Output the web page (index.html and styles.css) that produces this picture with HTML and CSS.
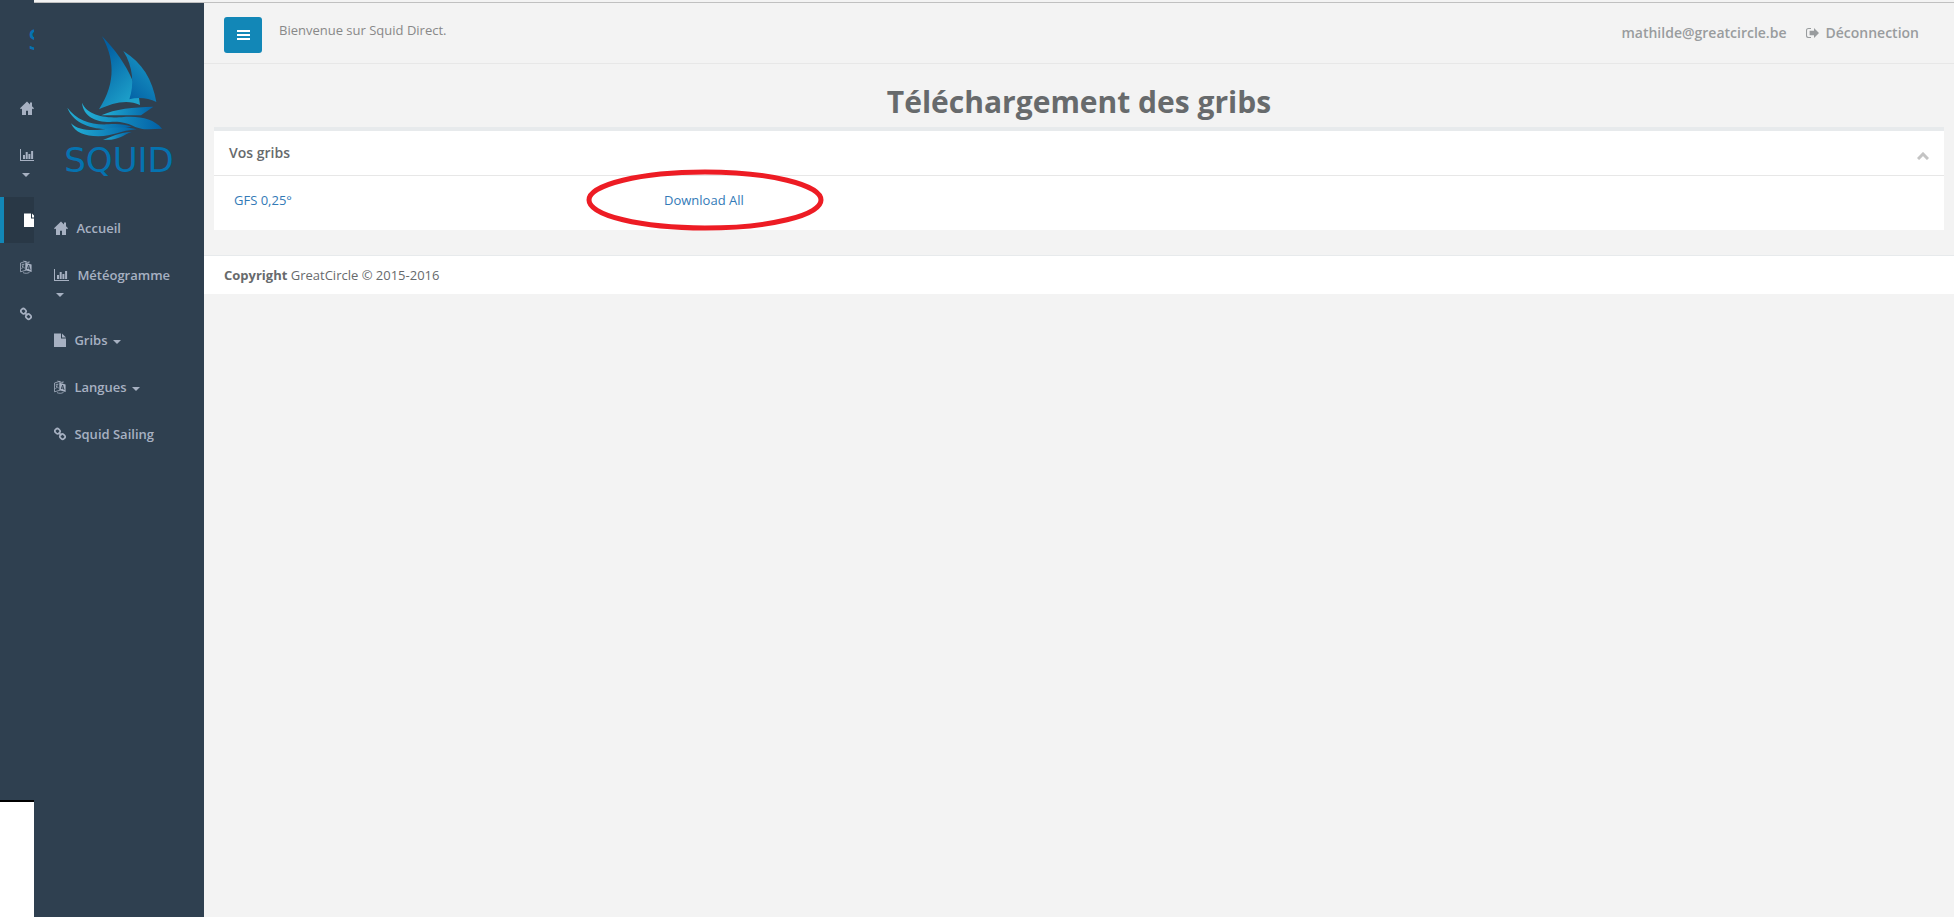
FILE: index.html
```html
<!DOCTYPE html>
<html lang="fr">
<head>
<meta charset="utf-8">
<title>Squid Direct</title>
<link rel="stylesheet" href="styles.css">
</head>
<body>
<svg class="defs" width="0" height="0" aria-hidden="true">
    <symbol id="i-home" viewBox="0 0 14 14"><path d="M7 .5L0 7.200l1 1L2 7.400V14h4V9.800h2V14h4V7.400l1 .8 1-1-2-1.900V1.500h-2v1.900z"/></symbol>
    <symbol id="i-chart" viewBox="0 0 15 14"><path d="M0 1h1v11h14v1H0zM3 7h2v4H3zM5.700 4h2v7h-2zM8.400 6h2v5h-2zM11.100 3h2v8h-2z"/></symbol>
    <symbol id="i-file" viewBox="0 0 12 14"><path d="M0 .5h7v5h5V14H0zM8 .5l4 4H8z"/></symbol>
    <symbol id="i-lang" viewBox="0 0 12 14"><path d="M5.500 2.800L11.600 4.500v7.500L5.500 10.200z"/><path d="M.5 3L6 1.300v8.900L.5 11.800zM3.400 1l5.600 1.800V1.200M3 12.600c2 1 4.500.9 6.500-.2" fill="none" stroke="currentColor" stroke-width=".8"/><path d="M1.500 5l3-.9M3 3.700v1.600C2.800 7 2.300 8 1.500 9M2 6l2.800 2.200" fill="none" stroke="currentColor" stroke-width=".7"/><path d="M7.300 9l1.300-4 1.500 5M7.700 7.900l2 .6" fill="none" stroke="#2f4050" stroke-width=".9"/></symbol>
    <symbol id="i-link" viewBox="0 0 12 14"><g fill="none" stroke="currentColor" stroke-width="1.700"><rect x="1" y="1.900" width="5" height="4.600" rx="1.900" transform="rotate(45 3.500 4.200)"/><rect x="6" y="7.300" width="5" height="4.600" rx="1.900" transform="rotate(45 8.500 9.600)"/><path d="M4.600 5.600l2.800 2.800"/></g></symbol>
    <symbol id="i-out" viewBox="0 0 13 14"><path d="M5 2.500H2.500q-2 0-2 2v5q0 2 2 2H5" fill="none" stroke="currentColor" stroke-width="1.100"/><path d="M8 2l5 5-5 5V9.200H3.600V4.800H8z"/></symbol>
</svg>

<!-- collapsed menu -->
<div class="rail">
    <nav class="rail-nav">
        <span class="rail-brand">S</span>
        <ul class="menu">
            <li><a href="#" aria-label="Accueil"><svg class="icon w14"><use href="#i-home"/></svg></a></li>
            <li><a href="#" aria-label="Météogramme"><svg class="icon w15"><use href="#i-chart"/></svg> <span class="caret"></span></a></li>
            <li class="active"><a href="#" aria-label="Gribs"><svg class="icon w12"><use href="#i-file"/></svg></a></li>
            <li><a href="#" aria-label="Langues"><svg class="icon w12"><use href="#i-lang"/></svg></a></li>
            <li><a href="#" aria-label="Squid Sailing"><svg class="icon w12"><use href="#i-link"/></svg></a></li>
        </ul>
    </nav>
    <div class="rail-end"></div>
</div>

<div class="page">
    <!-- full menu -->
    <nav class="sidebar">
        <div class="brand">
            <svg class="boat" viewBox="-3 0 360 330" aria-hidden="true">
                <defs>
                    <linearGradient id="sail1" x1="0" y1="0" x2=".6" y2="1"><stop offset="0.2" stop-color="#0260a3"/><stop offset="1" stop-color="#1ea2cb"/></linearGradient>
                    <linearGradient id="sail2" x1=".2" y1="1" x2=".7" y2=".2"><stop offset="0" stop-color="#0360a5"/><stop offset="1" stop-color="#1690c0"/></linearGradient>
                    <linearGradient id="hull" x1="0" y1="0" x2="1" y2="0"><stop offset="0" stop-color="#23b0d6"/><stop offset="1" stop-color="#0260a5"/></linearGradient>
                </defs>
                <path fill="url(#sail1)" d="M126 19C160 80 172 155 117 238C158 217 205 207 240 225L237 203L217 150C198 105 165 58 126 19z"/>
                <path fill="url(#sail2)" d="M190 63C247 98 278 150 289 216C265 204 235 201 208 208C223 165 220 110 190 63z"/>
                <path fill="url(#hull)" d="M124 256C165 236 220 232 280 230L243 256z"/>
                <path fill="url(#hull)" d="M66 218C82 257 135 264 185 262C235 257 280 265 306 296L265 298C220 300 215 272 150 276C105 276 70 258 66 218z"/>
                <path fill="url(#hull)" d="M22 233C50 271 95 286 145 283C175 281 195 283 215 290C150 304 50 304 22 233z"/>
                <path fill="url(#hull)" d="M33 280C60 307 115 302 155 294C185 291 210 293 230 298C180 302 160 318 115 319C75 319 45 308 33 280z"/>
                <path fill="url(#hull)" d="M129 329C155 323 175 306 215 306C188 315 175 333 129 329z"/>
            </svg>
            <span class="brand-name">SQUID</span>
        </div>
        <ul class="menu">
            <li><a href="#"><svg class="icon w14"><use href="#i-home"/></svg> Accueil</a></li>
            <li><a href="#"><svg class="icon w15"><use href="#i-chart"/></svg> Météogramme <span class="caret"></span></a></li>
            <li><a href="#"><svg class="icon w12"><use href="#i-file"/></svg> Gribs <span class="caret"></span></a></li>
            <li><a href="#"><svg class="icon w12"><use href="#i-lang"/></svg> Langues <span class="caret"></span></a></li>
            <li><a href="#"><svg class="icon w12"><use href="#i-link"/></svg> Squid Sailing</a></li>
        </ul>
    </nav>

    <main class="main">
        <header class="topbar">
            <button class="toggle" type="button" aria-label="Menu"><svg width="13" height="10" viewBox="0 0 13 10"><path fill="#fff" d="M0 0h13v2H0zM0 4h13v2H0zM0 8h13v2H0z"/></svg></button>
            <span class="welcome">Bienvenue sur Squid Direct.</span>
            <div class="user">
                <a href="#">mathilde@greatcircle.be</a>
                <a href="#"><svg class="icon w13"><use href="#i-out"/></svg>Déconnection</a>
            </div>
        </header>

        <h1>Téléchargement des gribs</h1>

        <section class="box">
            <div class="box-title">
                <h2>Vos gribs</h2>
                <button class="collapse" type="button" aria-label="Réduire"><svg width="12" height="8" viewBox="0 0 12 8"><path d="M1 7l5-5 5 5" fill="none" stroke="#c4c4c4" stroke-width="3"/></svg></button>
            </div>
            <div class="box-content">
                <div class="col"><a href="#">GFS 0,25°</a></div>
                <div class="col">
                    <a class="marked" href="#">Download All<svg class="ring" viewBox="0 0 238 62"><ellipse cx="119" cy="31" rx="116" ry="28" fill="none" stroke="#ed1c24" stroke-width="5"/></svg></a>
                </div>
            </div>
        </section>

        <footer class="footer"><strong>Copyright</strong> GreatCircle © 2015-2016</footer>
    </main>
</div>
</body>
</html>
```

FILE: styles.css
```css
* {
    box-sizing: border-box;
}
body {
    margin: 0;
    display: flex;
    min-height: 100vh;
    background: #f3f3f3;
    color: #676a6c;
    font-family: "Open Sans", "Liberation Sans", sans-serif;
    font-size: 13px;
    line-height: 18px;
}
a {
    color: #337ab7;
    text-decoration: none;
}
button {
    border: 0;
    padding: 0;
    cursor: pointer;
}
.defs {
    position: absolute;
}

/* icons */
.icon {
    height: 14px;
    fill: currentColor;
    vertical-align: -2px;
}
.w12 { width: 12px; }
.w13 { width: 13px; }
.w14 { width: 14px; }
.w15 { width: 15px; }
.caret {
    display: inline-block;
    margin-left: 2px;
    vertical-align: middle;
    border-top: 4px solid;
    border-left: 4px solid transparent;
    border-right: 4px solid transparent;
}

/* menus */
.menu {
    list-style: none;
    margin: 0;
    padding: 0;
    display: flex;
    flex-direction: column;
    gap: 1px;
}
.menu a {
    display: block;
    padding: 14px 25px 14px 20px;
    color: #a7b1c2;
    font-weight: 600;
}
.menu .icon {
    margin-right: 5px;
}
.rail {
    flex: none;
    width: 34px;
    display: flex;
    flex-direction: column;
}
.rail-nav {
    flex: 1;
    overflow: hidden;
    background: #2f4050;
}
.rail-brand {
    display: block;
    height: 85px;
    padding: 21px 0 0 28px;
    color: #0573b0;
    font: 28px/40px "DejaVu Sans", sans-serif;
}
.rail .menu a {
    padding-right: 0;
}
.rail .active {
    border-left: 4px solid #1287b7;
    background: #293846;
}
.rail .active a {
    color: #fff;
}
.rail-end {
    height: 117px;
    border-top: 2px solid #000;
    background: #fff;
}

.page {
    flex: 1;
    display: flex;
    border-top: 1px solid #c0c0c0;
    margin-top: 2px;
}
.sidebar {
    flex: none;
    width: 170px;
    background: #2f4050;
}
.brand {
    height: 202px;
    padding-top: 27px;
    display: flex;
    flex-direction: column;
    align-items: center;
}
.boat {
    width: 120px;
    height: 110px;
}
.brand-name {
    color: #0573b0;
    font: 34px/40px "DejaVu Sans", sans-serif;
}

/* content */
.main {
    flex: 1;
}
.topbar {
    display: flex;
    align-items: flex-start;
    height: 61px;
    padding: 14px 35px 0 20px;
    border-bottom: 1px solid #e7e7e7;
}
.toggle {
    width: 38px;
    height: 36px;
    border-radius: 3px;
    background: #1287b7;
}
.welcome {
    margin: 4px 0 0 17px;
    color: #888;
}
.user {
    display: flex;
    gap: 20px;
    margin: 7px 0 0 auto;
    font-size: 14px;
    font-weight: 600;
}
.user a {
    color: #999c9e;
}
.user .icon {
    margin-right: 6px;
}
h1 {
    margin: 18px 0 5px;
    font-size: 30px;
    line-height: 40px;
    text-align: center;
}
.box {
    margin: 0 10px 25px;
    border-top: 4px solid #e7eaec;
    background: #fff;
}
.box-title {
    display: flex;
    justify-content: space-between;
    align-items: center;
    height: 45px;
    padding: 0 15px;
    border-bottom: 1px solid #e7e7e7;
}
h2 {
    margin: 0;
    font-size: 14px;
    font-weight: 600;
}
.collapse {
    height: 8px;
    margin-top: 6px;
    line-height: 8px;
    background: none;
}
.box-content {
    display: grid;
    grid-template-columns: repeat(4, 1fr);
    padding: 15px 5px 21px;
}
.col {
    padding: 0 15px;
}
.marked {
    position: relative;
}
.ring {
    position: absolute;
    top: -22px;
    left: -78px;
    width: 238px;
    height: 62px;
    pointer-events: none;
}
.footer {
    padding: 10px 20px;
    border-top: 1px solid #e7eaec;
    background: #fff;
}
```
